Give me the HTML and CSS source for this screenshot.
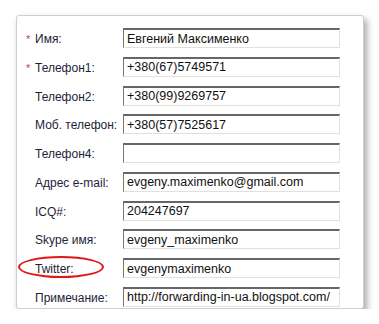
FILE: index.html
```html
<!DOCTYPE html>
<html lang="ru">
<head>
    <meta charset="UTF-8">
    <meta name="viewport" content="width=device-width, initial-scale=1.0">
    <title>Контактные данные</title>
    <link rel="stylesheet" href="styles.css">
</head>
<body>
    <div class="panel">
        <form class="contact-form">
            <label class="field-label"><span class="req">*</span>Имя:</label>
            <input class="field-input" type="text" value="Евгений Максименко">

            <label class="field-label"><span class="req">*</span>Телефон1:</label>
            <input class="field-input" type="text" value="+380(67)5749571">

            <label class="field-label"><span class="req"></span>Телефон2:</label>
            <input class="field-input" type="text" value="+380(99)9269757">

            <label class="field-label"><span class="req"></span>Моб. телефон:</label>
            <input class="field-input" type="text" value="+380(57)7525617">

            <label class="field-label"><span class="req"></span>Телефон4:</label>
            <input class="field-input" type="text" value="">

            <label class="field-label"><span class="req"></span>Адрес e-mail:</label>
            <input class="field-input" type="text" value="evgeny.maximenko@gmail.com">

            <label class="field-label"><span class="req"></span>ICQ#:</label>
            <input class="field-input" type="text" value="204247697">

            <label class="field-label"><span class="req"></span>Skype имя:</label>
            <input class="field-input" type="text" value="evgeny_maximenko">

            <label class="field-label"><span class="req"></span><span class="marked">Twitter:<span class="circle"></span></span></label>
            <input class="field-input" type="text" value="evgenymaximenko">

            <label class="field-label"><span class="req"></span>Примечание:</label>
            <input class="field-input" type="text" value="http://forwarding-in-ua.blogspot.com/">
        </form>
    </div>
</body>
</html>
```

FILE: styles.css
```css
body {
    margin: 0;
    padding: 0;
    background: #fff;
    font-family: "Liberation Sans", Arial, sans-serif;
}
.panel {
    margin: 15px 0 0 16px;
    width: 346px;
    height: 292px;
    background: #fff;
    border: 1px solid #cfcfcf;
    border-radius: 3px;
    box-shadow: 3px 4px 7px rgba(0, 0, 0, 0.35);
}
.contact-form {
    display: grid;
    grid-template-columns: 97px 217px;
    row-gap: 8.78px;
    padding: 12px 0 0 9px;
    align-items: center;
}
.field-label {
    display: flex;
    align-items: center;
    font-size: 12px;
    color: #1e1e38;
    padding-top: 2px;
}
.req {
    width: 9px;
    color: #b84a4a;
    font-size: 11px;
}
.marked {
    position: relative;
}
.circle {
    position: absolute;
    left: -17px;
    top: -6px;
    width: 82px;
    height: 18px;
    border: 2px solid #e01818;
    border-radius: 50%;
}
.field-input {
    box-sizing: border-box;
    width: 217px;
    height: 20px;
    margin: 0;
    padding: 0 3px;
    font-family: "Liberation Sans", Arial, sans-serif;
    font-size: 12.5px;
    color: #111;
    background: #fff;
    border-top: 2px solid #666;
    border-left: 1px solid #777;
    border-right: 1px solid #e2e0da;
    border-bottom: 1px solid #e2e0da;
    outline: none;
}
```
